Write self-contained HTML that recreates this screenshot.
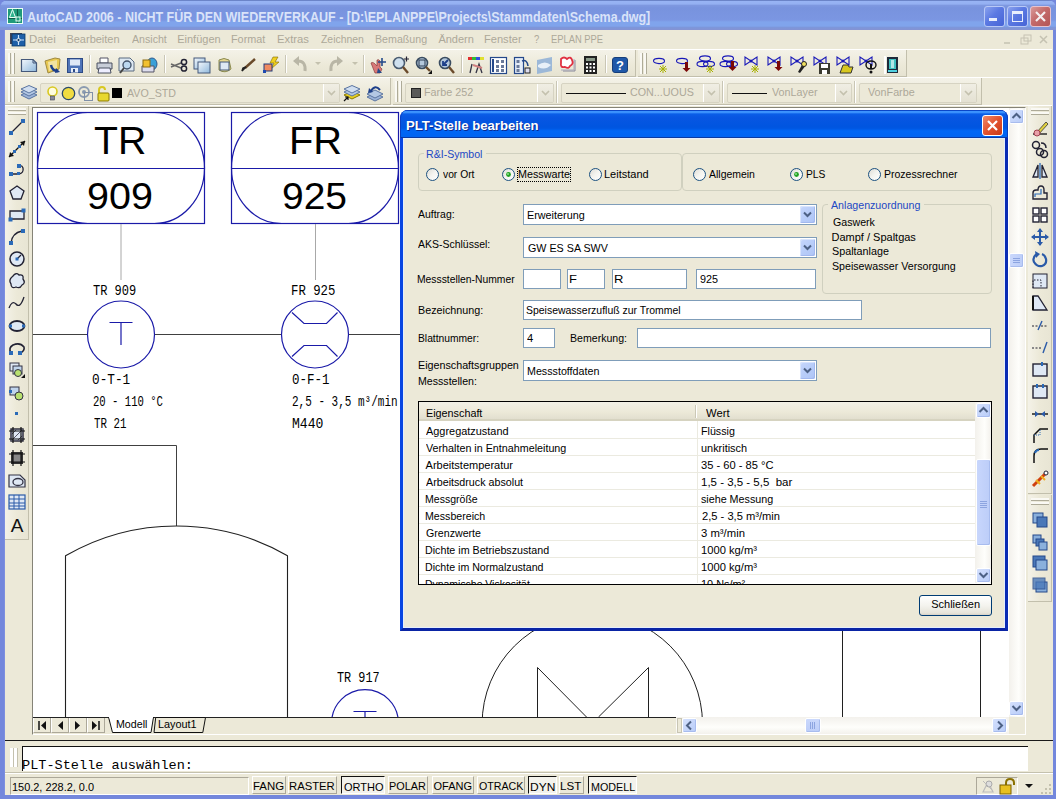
<!DOCTYPE html>
<html><head><meta charset="utf-8">
<style>
*{margin:0;padding:0;box-sizing:border-box}
html,body{width:1056px;height:799px;overflow:hidden;background:#ECE9D8;font-family:"Liberation Sans",sans-serif;font-size:11px;color:#000}
.a{position:absolute}
.t{position:absolute;white-space:pre;line-height:1;transform-origin:0 0}
svg{position:absolute;overflow:visible}
</style></head>
<body>
<div class="a" style="left:0px;top:0px;width:1056px;height:799px;background:#7387dc;"></div>
<div class="a" style="left:0px;top:0px;width:1056px;height:30px;background:linear-gradient(180deg,#6b84c8 0px,#6b84c8 1px,#98b4f4 1px,#94b0f2 4px,#7e98e0 5.5px,#7893de 8px,#7b96e2 20px,#80a4ec 22px,#80a4ec 26px,#7d96da 27.5px,#8592d2 30px);border-radius:8px 8px 0 0;"></div>
<div class="a" style="left:4px;top:30px;width:1049px;height:765px;background:#ECE9D8;"></div>
<svg style="left:7px;top:8px" width="16" height="16" viewBox="0 0 16 16">
<rect x="0.5" y="0.5" width="15" height="15" fill="#1f9a7a" stroke="#eafff6"/>
<path d="M2.5 9.5 L5.5 1.5 L8.5 9.5 Z" fill="#2fb38e" stroke="#eafff6" stroke-width="1"/>
<rect x="10" y="1" width="1" height="14" fill="#0d5a46"/>
<rect x="1" y="10" width="14" height="1" fill="#0d5a46"/>
<rect x="9" y="9" width="4" height="4" fill="#1f9a7a" stroke="#eafff6" stroke-width="1"/>
</svg>
<div class="a" style="left:984px;top:6px;width:21px;height:21px;background:linear-gradient(135deg,#8aa2ee 0%,#5b79e2 45%,#4664d6 100%);border:1px solid #b9c9f6;border-radius:3px;"></div>
<div class="a" style="left:1007px;top:6px;width:21px;height:21px;background:linear-gradient(135deg,#8aa2ee 0%,#5b79e2 45%,#4664d6 100%);border:1px solid #b9c9f6;border-radius:3px;"></div>
<div class="a" style="left:1030px;top:6px;width:21px;height:21px;background:linear-gradient(135deg,#d99a9a 0%,#c46a6a 45%,#b35454 100%);border:1px solid #e6c3cf;border-radius:3px;"></div>
<div class="a" style="left:989px;top:18px;width:8px;height:3px;background:#e8eefc;"></div>
<div class="a" style="left:1012px;top:11px;width:11px;height:11px;border:1px solid #e8eefc;border-top-width:3px;"></div>
<svg style="left:1030px;top:6px" width="21" height="21"><path d="M6 6 L15 15 M15 6 L6 15" stroke="#f4eef0" stroke-width="2.2"/></svg>
<svg style="left:9px;top:32px" width="17" height="15" viewBox="0 0 17 15">
<rect x="1" y="1" width="12" height="11" fill="#445" />
<rect x="3" y="2" width="13" height="12" fill="#1d5fa8" stroke="#0c3866" stroke-width="0.8"/>
<path d="M9.5 3 V13 M4 8 H15" stroke="#cfe6ff" stroke-width="1.2"/>
<circle cx="9.5" cy="8" r="1.6" fill="#0c3866" stroke="#fff" stroke-width="0.8"/>
</svg>
<svg style="left:995px;top:33px" width="56" height="15">
<path d="M9 10 H15" stroke="#c5c2b2" stroke-width="1.5"/>
<rect x="26" y="5" width="7" height="6" fill="none" stroke="#c5c2b2"/><rect x="29" y="2" width="7" height="6" fill="none" stroke="#c5c2b2"/>
<path d="M45 3 L52 10 M52 3 L45 10" stroke="#c5c2b2" stroke-width="1.5"/>
</svg>
<div class="a" style="left:4px;top:49px;width:1048px;height:1px;background:#fff;"></div>
<div class="a" style="left:4px;top:77px;width:1048px;height:1px;background:#fff;"></div>
<div class="a" style="left:5px;top:50px;width:631px;height:27px;background:linear-gradient(180deg,#f4f2e8,#ECE9D8 60%,#e6e3d2);border-bottom:1px solid #c2bfac;border-right:1px solid #c2bfac;"></div>
<div class="a" style="left:8px;top:53px;width:2px;height:21px;background:#faf9f4;border-right:1px solid #aeab98;width:3px;"></div>
<div class="a" style="left:12px;top:53px;width:2px;height:21px;background:#faf9f4;border-right:1px solid #aeab98;width:3px;"></div>
<div class="a" style="left:638px;top:50px;width:269px;height:27px;background:linear-gradient(180deg,#f4f2e8,#ECE9D8 60%,#e6e3d2);border-bottom:1px solid #c2bfac;border-right:1px solid #c2bfac;"></div>
<div class="a" style="left:640px;top:53px;width:2px;height:21px;background:#faf9f4;border-right:1px solid #aeab98;width:3px;"></div>
<div class="a" style="left:644px;top:53px;width:2px;height:21px;background:#faf9f4;border-right:1px solid #aeab98;width:3px;"></div>
<div class="a" style="left:89px;top:55px;width:1px;height:18px;background:#c9c6b5;"></div>
<div class="a" style="left:90px;top:55px;width:1px;height:18px;background:#fff;"></div>
<div class="a" style="left:164px;top:55px;width:1px;height:18px;background:#c9c6b5;"></div>
<div class="a" style="left:165px;top:55px;width:1px;height:18px;background:#fff;"></div>
<div class="a" style="left:285px;top:55px;width:1px;height:18px;background:#c9c6b5;"></div>
<div class="a" style="left:286px;top:55px;width:1px;height:18px;background:#fff;"></div>
<div class="a" style="left:363px;top:55px;width:1px;height:18px;background:#c9c6b5;"></div>
<div class="a" style="left:364px;top:55px;width:1px;height:18px;background:#fff;"></div>
<div class="a" style="left:461px;top:55px;width:1px;height:18px;background:#c9c6b5;"></div>
<div class="a" style="left:462px;top:55px;width:1px;height:18px;background:#fff;"></div>
<div class="a" style="left:605px;top:55px;width:1px;height:18px;background:#c9c6b5;"></div>
<div class="a" style="left:606px;top:55px;width:1px;height:18px;background:#fff;"></div>
<div class="a" style="left:5px;top:78px;width:386px;height:27px;background:linear-gradient(180deg,#f4f2e8,#ECE9D8 60%,#e6e3d2);border-bottom:1px solid #c2bfac;border-right:1px solid #c2bfac;"></div>
<div class="a" style="left:8px;top:81px;width:2px;height:21px;background:#faf9f4;border-right:1px solid #aeab98;width:3px;"></div>
<div class="a" style="left:12px;top:81px;width:2px;height:21px;background:#faf9f4;border-right:1px solid #aeab98;width:3px;"></div>
<div class="a" style="left:393px;top:78px;width:589px;height:27px;background:linear-gradient(180deg,#f4f2e8,#ECE9D8 60%,#e6e3d2);border-bottom:1px solid #c2bfac;border-right:1px solid #c2bfac;"></div>
<div class="a" style="left:395px;top:81px;width:2px;height:21px;background:#faf9f4;border-right:1px solid #aeab98;width:3px;"></div>
<div class="a" style="left:399px;top:81px;width:2px;height:21px;background:#faf9f4;border-right:1px solid #aeab98;width:3px;"></div>
<svg style="left:0;top:0" width="0" height="0"><defs><linearGradient id="gb" x1="0" y1="0" x2="1" y2="1"><stop offset="0" stop-color="#f4f8fc"/><stop offset="1" stop-color="#8fb8dc"/></linearGradient><linearGradient id="gy" x1="0" y1="0" x2="0" y2="1"><stop offset="0" stop-color="#fff38a"/><stop offset="1" stop-color="#d8b400"/></linearGradient></defs></svg>
<svg style="left:20px;top:58px;" width="18" height="15" viewBox="0 0 18 15"><path d="M1.5 1.5 H13 L16.5 5 V13.5 H1.5 Z" fill="url(#gb)" stroke="#44587a" stroke-width="1.2"/><path d="M13 1.5 V5 H16.5" fill="none" stroke="#44587a"/></svg>
<svg style="left:43px;top:57px;" width="19" height="17" viewBox="0 0 19 17"><path d="M2 4 L12 1 L17 2 L16 12 L5 16 Z" fill="#e8c850" stroke="#a08a40"/><path d="M5 5 L14 3 L14 11 L6 14Z" fill="#f2e2a0"/><path d="M8 8 Q9 14 15 14" stroke="#1d3f8a" stroke-width="2.4" fill="none"/><path d="M13 11 L17 15 L12 16Z" fill="#1d3f8a"/></svg>
<svg style="left:67px;top:58px;" width="16" height="15" viewBox="0 0 16 15"><rect x="0.5" y="0.5" width="15" height="14" fill="#4f74b8" stroke="#2c4a86"/><rect x="3" y="1.5" width="10" height="6" fill="#dfe8f6"/><rect x="4" y="10" width="7" height="4.5" fill="#e8eef8"/><rect x="6" y="11" width="2" height="3" fill="#2c4a86"/></svg>
<svg style="left:96px;top:57px;" width="17" height="17" viewBox="0 0 17 17"><path d="M4 1 H12 V6 H4Z" fill="#fff" stroke="#556"/><path d="M1 6 H16 V12 H1Z" fill="#c8cdd8" stroke="#4a5060"/><path d="M3 11 H14 L15 16 H2Z" fill="#eef" stroke="#4a5060"/></svg>
<svg style="left:118px;top:57px;" width="17" height="18" viewBox="0 0 17 18"><path d="M1 1 H12 L16 5 V14 H1Z" fill="#dde8f2" stroke="#5a6a80"/><circle cx="9" cy="8" r="4" fill="#bcd8f0" stroke="#44546a" stroke-width="1.4"/><path d="M6 11 L2 16" stroke="#444" stroke-width="2"/></svg>
<svg style="left:140px;top:57px;" width="18" height="17" viewBox="0 0 18 17"><ellipse cx="12" cy="7" rx="5" ry="6" fill="#3aa0d8" stroke="#2a5a90"/><path d="M2 9 H14 V15 H2Z" fill="#dde" stroke="#556"/><rect x="3" y="3" width="7" height="7" fill="#f2c030" stroke="#8a6a10"/></svg>
<svg style="left:170px;top:58px;" width="18" height="14" viewBox="0 0 18 14"><path d="M1 6 L11 10 M1 9 L11 5" stroke="#666" stroke-width="1.4"/><circle cx="14" cy="4" r="2.6" fill="none" stroke="#223" stroke-width="1.5"/><circle cx="14" cy="10.5" r="2.6" fill="none" stroke="#223" stroke-width="1.5"/></svg>
<svg style="left:193px;top:57px;" width="18" height="17" viewBox="0 0 18 17"><rect x="1" y="1" width="11" height="11" fill="url(#gb)" stroke="#44587a"/><rect x="5" y="5" width="12" height="11" fill="url(#gb)" stroke="#44587a"/></svg>
<svg style="left:216px;top:57px;" width="17" height="17" viewBox="0 0 17 17"><path d="M3 3 Q8 0 13 3 L15 12 Q9 17 3 13 Z" fill="#e8d890" stroke="#8a8a50"/><rect x="4" y="5" width="9" height="8" fill="#dfe9f4" stroke="#44587a"/></svg>
<svg style="left:241px;top:58px;" width="15" height="14" viewBox="0 0 15 14"><path d="M14 1 L4 10" stroke="#6a4a2a" stroke-width="2.4"/><path d="M5 9 L1 13 L2 10Z" fill="#222" stroke="#222" stroke-width="1.5"/></svg>
<svg style="left:262px;top:56px;" width="18" height="18" viewBox="0 0 18 18"><path d="M11 1 L16 1 L13 6 L17 6 L9 13 L12 7 L8 7Z" fill="#f0d020" stroke="#806a00" stroke-width="0.6"/><rect x="2" y="8" width="8" height="7" fill="#f08a60" stroke="#223a7a"/><rect x="1" y="14" width="3" height="3" fill="#1f4ab0"/></svg>
<svg style="left:291px;top:56px;" width="17" height="18" viewBox="0 0 17 18"><path d="M14 15 Q15 5 7 5" stroke="#b9b6a6" stroke-width="3" fill="none"/><path d="M2 5 L8 0 L8 10Z" fill="#b9b6a6"/></svg>
<svg style="left:315px;top:62px;" width="6" height="4" viewBox="0 0 6 4"><path d="M0 0 H6 L3 3Z" fill="#c4c1ae"/></svg>
<svg style="left:328px;top:56px;" width="17" height="18" viewBox="0 0 17 18"><path d="M3 15 Q2 5 10 5" stroke="#b9b6a6" stroke-width="3" fill="none"/><path d="M15 5 L9 0 L9 10Z" fill="#b9b6a6"/></svg>
<svg style="left:352px;top:62px;" width="6" height="4" viewBox="0 0 6 4"><path d="M0 0 H6 L3 3Z" fill="#c4c1ae"/></svg>
<svg style="left:369px;top:57px;" width="18" height="18" viewBox="0 0 18 18"><path d="M2 6 Q4 4 8 9 L8 3 Q10 2 11 4 L11 10 L13 12 L11 16 L6 16 Z" fill="#d87878" stroke="#8a3a3a" stroke-width="0.7"/><path d="M9 11 L13 16 L8 16Z" fill="#244a8a"/><path d="M13 1 V9 M9 5 H17" stroke="#244a8a" stroke-width="1.6"/></svg>
<svg style="left:392px;top:56px;" width="18" height="19" viewBox="0 0 18 19"><circle cx="7" cy="7" r="5.5" fill="#cfe0ee" stroke="#4a5c70" stroke-width="1.6"/><path d="M11 11 L16 17" stroke="#6a4a2a" stroke-width="2.4"/><path d="M12 3 H17 M14.5 0.5 V5.5" stroke="#223" stroke-width="1.2"/></svg>
<svg style="left:415px;top:56px;" width="18" height="19" viewBox="0 0 18 19"><circle cx="7" cy="7" r="5.5" fill="#b4c8dc" stroke="#3a4c60" stroke-width="1.6"/><rect x="4" y="4" width="6" height="6" fill="none" stroke="#2a3a50"/><path d="M11 11 L15 15" stroke="#6a4a2a" stroke-width="2.4"/><path d="M13 18 L17 14 V18Z" fill="#111"/></svg>
<svg style="left:438px;top:56px;" width="17" height="19" viewBox="0 0 17 19"><circle cx="7" cy="7" r="5.5" fill="#b4c8dc" stroke="#3a4c60" stroke-width="1.6"/><path d="M10 4 L5 9 M5 5 V9 H9" stroke="#1d3f8a" stroke-width="1.8" fill="none"/><path d="M11 11 L16 17" stroke="#6a4a2a" stroke-width="2.4"/></svg>
<svg style="left:467px;top:56px;" width="18" height="19" viewBox="0 0 18 19"><rect x="1" y="1" width="4" height="3" fill="#e03030"/><rect x="5" y="1" width="4" height="3" fill="#30c030"/><rect x="9" y="1" width="4" height="3" fill="#3050e0"/><rect x="13" y="1" width="4" height="3" fill="#e0e030"/><path d="M3 17 L5 8 M9 17 L12 8 L15 17" stroke="#334" stroke-width="1.3" fill="none"/><path d="M6 9 L15 12" stroke="#d08080" stroke-width="2"/></svg>
<svg style="left:490px;top:57px;" width="17" height="17" viewBox="0 0 17 17"><rect x="0.5" y="0.5" width="16" height="16" fill="#fff" stroke="#24488a" stroke-width="1.2"/><rect x="2" y="2" width="2" height="13" fill="#24488a"/><rect x="6" y="3" width="3" height="3" fill="#6a7a9a"/><rect x="11" y="3" width="3" height="3" fill="#6a7a9a"/><rect x="6" y="8" width="3" height="3" fill="#6a7a9a"/><rect x="11" y="8" width="3" height="3" fill="#6a7a9a"/><rect x="6" y="12" width="3" height="3" fill="#6a7a9a"/><rect x="11" y="12" width="3" height="3" fill="#6a7a9a"/></svg>
<svg style="left:514px;top:57px;" width="17" height="17" viewBox="0 0 17 17"><rect x="0.5" y="0.5" width="9" height="16" fill="#e4ecf8" stroke="#24488a" stroke-width="1.2"/><rect x="2.5" y="3" width="3" height="3" fill="#6a7a9a"/><rect x="2.5" y="8" width="3" height="3" fill="#6a7a9a"/><rect x="2.5" y="12" width="3" height="3" fill="#6a7a9a"/><path d="M8 4 Q13 2 14 9" stroke="#24488a" stroke-width="1.6" fill="none"/><rect x="11" y="11" width="5" height="5" fill="#dde" stroke="#222"/></svg>
<svg style="left:536px;top:57px;" width="17" height="17" viewBox="0 0 17 17"><path d="M1 3 L16 0 V14 L1 17Z" fill="#9cb8d8"/><path d="M2 8 Q9 3 15 8 Q9 14 2 10Z" fill="#e8f0f8"/></svg>
<svg style="left:559px;top:56px;" width="17" height="18" viewBox="0 0 17 18"><path d="M4 15 H16 V4" stroke="#889" fill="none"/><path d="M2 14 H15 V3" stroke="#aab" fill="none"/><path d="M2 3 Q5 0 8 3 Q12 0 13 4 Q15 8 11 10 Q10 13 6 11 Q1 12 2 7 Z" fill="#fff" stroke="#e03040" stroke-width="1.8"/></svg>
<svg style="left:584px;top:56px;" width="13" height="18" viewBox="0 0 13 18"><rect x="0" y="0" width="13" height="18" fill="#222"/><rect x="2" y="2" width="9" height="3" fill="#8a9a8a"/><g fill="#fff"><rect x="2" y="7" width="2" height="2"/><rect x="5.5" y="7" width="2" height="2"/><rect x="9" y="7" width="2" height="2"/><rect x="2" y="10.5" width="2" height="2"/><rect x="5.5" y="10.5" width="2" height="2"/><rect x="9" y="10.5" width="2" height="2"/><rect x="2" y="14" width="2" height="2"/><rect x="5.5" y="14" width="2" height="2"/><rect x="9" y="14" width="2" height="2"/></g></svg>
<svg style="left:612px;top:57px;" width="16" height="16" viewBox="0 0 16 16"><rect x="0.5" y="0.5" width="15" height="15" rx="2.5" fill="#1f58a8" stroke="#163e7a"/><text x="8" y="13" font-family="Liberation Sans" font-weight="bold" font-size="13" fill="#fff" text-anchor="middle">?</text></svg>
<svg style="left:652px;top:56px;" width="18" height="19" viewBox="0 0 18 19"><ellipse cx="7" cy="5" rx="5.5" ry="2.6" fill="none" stroke="#1818b8" stroke-width="1.1"/><path d="M7 13 H15 M11 9 V17 M8 10 L14 16 M14 10 L8 16" stroke="#a8b000" stroke-width="1"/></svg>
<svg style="left:675px;top:56px;" width="18" height="19" viewBox="0 0 18 19"><ellipse cx="7" cy="5" rx="5.5" ry="2.6" fill="none" stroke="#1818b8" stroke-width="1.1"/><path d="M10 6 V12 H7.5 L11.5 16 L15.5 12 H13 V6Z" fill="#7a0808"/></svg>
<svg style="left:698px;top:55px;" width="18" height="20" viewBox="0 0 18 20"><ellipse cx="7" cy="3.5" rx="5.5" ry="2.6" fill="none" stroke="#1818b8" stroke-width="1.1"/><ellipse cx="4.5" cy="9" rx="5.5" ry="2.6" fill="none" stroke="#1818b8" stroke-width="1.1"/><ellipse cx="11" cy="9" rx="5.5" ry="2.6" fill="none" stroke="#1818b8" stroke-width="1.1"/><path d="M8 14 H16 M12 10 V18 M9 11 L15 17 M15 11 L9 17" stroke="#a8b000" stroke-width="1"/></svg>
<svg style="left:721px;top:55px;" width="18" height="20" viewBox="0 0 18 20"><ellipse cx="7" cy="3.5" rx="5.5" ry="2.6" fill="none" stroke="#1818b8" stroke-width="1.1"/><ellipse cx="4.5" cy="9" rx="5.5" ry="2.6" fill="none" stroke="#1818b8" stroke-width="1.1"/><ellipse cx="11" cy="9" rx="5.5" ry="2.6" fill="none" stroke="#1818b8" stroke-width="1.1"/><path d="M10 6 V12 H7.5 L11.5 16 L15.5 12 H13 V6Z" fill="#7a0808"/></svg>
<svg style="left:744px;top:55px;" width="18" height="20" viewBox="0 0 18 20"><path d="M1 2 V10 L13 2 V10 Z" fill="none" stroke="#1818b8" stroke-width="1.1"/><circle cx="7" cy="6" r="1.5" fill="#1818b8"/><path d="M7 14 H15 M11 10 V18 M8 11 L14 17 M14 11 L8 17" stroke="#a8b000" stroke-width="1"/></svg>
<svg style="left:767px;top:55px;" width="18" height="20" viewBox="0 0 18 20"><path d="M1 2 V10 L13 2 V10 Z" fill="none" stroke="#1818b8" stroke-width="1.1"/><circle cx="7" cy="6" r="1.5" fill="#1818b8"/><path d="M10 6 V12 H7.5 L11.5 16 L15.5 12 H13 V6Z" fill="#7a0808"/></svg>
<svg style="left:790px;top:55px;" width="18" height="20" viewBox="0 0 18 20"><path d="M1 2 V10 L13 2 V10 Z" fill="none" stroke="#1818b8" stroke-width="1.1"/><circle cx="7" cy="6" r="1.5" fill="#1818b8"/><path d="M8 17 L13 8 L16 10 L10 18Z" fill="#222"/><circle cx="14" cy="9" r="2.5" fill="#f0e060" stroke="#222"/></svg>
<svg style="left:813px;top:55px;" width="18" height="20" viewBox="0 0 18 20"><path d="M1 2 V10 L13 2 V10 Z" fill="none" stroke="#1818b8" stroke-width="1.1"/><circle cx="7" cy="6" r="1.5" fill="#1818b8"/><rect x="6" y="8" width="11" height="11" fill="#3a3a30"/><rect x="8" y="9" width="7" height="4" fill="#fff"/><rect x="9" y="15" width="5" height="4" fill="#fff"/></svg>
<svg style="left:836px;top:55px;" width="18" height="20" viewBox="0 0 18 20"><path d="M1 2 V10 L13 2 V10 Z" fill="none" stroke="#1818b8" stroke-width="1.1"/><circle cx="7" cy="6" r="1.5" fill="#1818b8"/><path d="M4 18 L7 10 H12 L13 12 H17 L15 18Z" fill="#d8c820" stroke="#333"/></svg>
<svg style="left:859px;top:55px;" width="18" height="20" viewBox="0 0 18 20"><path d="M1 2 V10 L13 2 V10 Z" fill="none" stroke="#1818b8" stroke-width="1.1"/><circle cx="7" cy="6" r="1.5" fill="#1818b8"/><ellipse cx="12" cy="10" rx="5" ry="4" fill="none" stroke="#111" stroke-width="1.4"/><rect x="11" y="9" width="2" height="5" fill="#111"/><circle cx="12" cy="17" r="1.5" fill="#111"/></svg>
<svg style="left:884px;top:56px;" width="15" height="18" viewBox="0 0 15 18"><rect x="0" y="0" width="2" height="18" fill="#fff"/><rect x="3" y="1" width="11" height="16" fill="#1e2a3a"/><rect x="5" y="3" width="7" height="10" fill="#40c0c0"/><rect x="7" y="4" width="3" height="8" fill="#fff" opacity=".6"/><rect x="4" y="14" width="9" height="2" fill="#50d0e0"/></svg>
<svg style="left:20px;top:85px;" width="18" height="16" viewBox="0 0 18 16"><path d="M1 10 L9 6 L17 10 L9 14Z" fill="#9db4d8" stroke="#5a74a0"/><path d="M1 7 L9 3 L17 7 L9 11Z" fill="#b4c8e4" stroke="#5a74a0"/><path d="M1 4 L9 0.5 L17 4 L9 8Z" fill="#d0def0" stroke="#5a74a0"/></svg>
<div class="a" style="left:40px;top:83px;width:300px;height:20px;background:#ECE9D8;border:1px solid #d6d3c2;border-radius:2px;"></div>
<div class="a" style="left:323px;top:84px;width:16px;height:18px;background:linear-gradient(180deg,#f0eee4,#e4e1d2);border-left:1px solid #fff;"></div>
<svg style="left:327px;top:90px;" width="9" height="6" viewBox="0 0 9 6"><path d="M1 1 L4.5 4.5 L8 1" stroke="#c4c1ae" stroke-width="1.6" fill="none"/></svg>
<svg style="left:47px;top:86px;" width="11" height="16" viewBox="0 0 11 16"><circle cx="5.5" cy="5.5" r="4.5" fill="#fffce0" stroke="#d8c820" stroke-width="1.6"/><rect x="3.5" y="10" width="4" height="4" fill="#889" stroke="#445" stroke-width="0.6"/></svg>
<svg style="left:61px;top:86px;" width="15" height="15" viewBox="0 0 15 15"><circle cx="7.5" cy="7.5" r="6.2" fill="#f0dc40" stroke="#2a4a6a" stroke-width="1.3"/></svg>
<svg style="left:78px;top:86px;" width="15" height="15" viewBox="0 0 15 15"><circle cx="6" cy="6" r="5" fill="none" stroke="#8a9ab0" stroke-width="1.8"/><circle cx="6" cy="6" r="2" fill="#8a9ab0"/><rect x="6.5" y="6.5" width="8" height="8" fill="none" stroke="#8090a8"/></svg>
<svg style="left:96px;top:86px;" width="14" height="15" viewBox="0 0 14 15"><path d="M3 7 V4 Q3 1 6 1 Q9 1 9 4" stroke="#d8c820" stroke-width="2" fill="none"/><rect x="2" y="7" width="11" height="8" rx="1" fill="#e8d830" stroke="#8a7a00"/></svg>
<div class="a" style="left:112px;top:88px;width:10px;height:10px;background:#000;"></div>
<svg style="left:343px;top:85px;" width="18" height="17" viewBox="0 0 18 17"><path d="M1 10 L9 6 L17 10 L9 14Z" fill="#e8d020" stroke="#8a7a00"/><path d="M1 7 L9 3 L17 7 L9 11Z" fill="#b4c8e4" stroke="#5a74a0"/><path d="M1 4 L9 0.5 L17 4 L9 8Z" fill="#d0def0" stroke="#5a74a0"/><path d="M1 16 L5 12 M2 12 H5 V15" stroke="#111" stroke-width="1.2" fill="none"/></svg>
<svg style="left:366px;top:85px;" width="18" height="17" viewBox="0 0 18 17"><path d="M1 12 L9 8 L17 12 L9 16Z" fill="#9db4d8" stroke="#5a74a0"/><path d="M1 9 L9 5 L17 9 L9 13Z" fill="#b4c8e4" stroke="#5a74a0"/><path d="M5 6 Q9 -1 14 5" stroke="#1d3f8a" stroke-width="2" fill="none"/><path d="M3 3 L7 7 L2 8Z" fill="#1d3f8a"/></svg>
<div class="a" style="left:405px;top:83px;width:149px;height:20px;background:#ECE9D8;border:1px solid #d6d3c2;border-radius:2px;"></div>
<div class="a" style="left:537px;top:84px;width:16px;height:18px;background:linear-gradient(180deg,#f0eee4,#e4e1d2);border-left:1px solid #fff;"></div>
<svg style="left:541px;top:90px;" width="9" height="6" viewBox="0 0 9 6"><path d="M1 1 L4.5 4.5 L8 1" stroke="#c4c1ae" stroke-width="1.6" fill="none"/></svg>
<div class="a" style="left:411px;top:88px;width:10px;height:10px;background:#5a5a58;border:1px solid #222;"></div>
<div class="a" style="left:556px;top:81px;width:1px;height:22px;background:#c9c6b5;"></div>
<div class="a" style="left:557px;top:81px;width:1px;height:22px;background:#fff;"></div>
<div class="a" style="left:561px;top:83px;width:159px;height:20px;background:#ECE9D8;border:1px solid #d6d3c2;border-radius:2px;"></div>
<div class="a" style="left:703px;top:84px;width:16px;height:18px;background:linear-gradient(180deg,#f0eee4,#e4e1d2);border-left:1px solid #fff;"></div>
<svg style="left:707px;top:90px;" width="9" height="6" viewBox="0 0 9 6"><path d="M1 1 L4.5 4.5 L8 1" stroke="#c4c1ae" stroke-width="1.6" fill="none"/></svg>
<div class="a" style="left:566px;top:93px;width:60px;height:1px;background:#111;"></div>
<div class="a" style="left:722px;top:81px;width:1px;height:22px;background:#c9c6b5;"></div>
<div class="a" style="left:723px;top:81px;width:1px;height:22px;background:#fff;"></div>
<div class="a" style="left:727px;top:83px;width:125px;height:20px;background:#ECE9D8;border:1px solid #d6d3c2;border-radius:2px;"></div>
<div class="a" style="left:835px;top:84px;width:16px;height:18px;background:linear-gradient(180deg,#f0eee4,#e4e1d2);border-left:1px solid #fff;"></div>
<svg style="left:839px;top:90px;" width="9" height="6" viewBox="0 0 9 6"><path d="M1 1 L4.5 4.5 L8 1" stroke="#c4c1ae" stroke-width="1.6" fill="none"/></svg>
<div class="a" style="left:732px;top:93px;width:35px;height:1px;background:#111;"></div>
<div class="a" style="left:854px;top:81px;width:1px;height:22px;background:#c9c6b5;"></div>
<div class="a" style="left:855px;top:81px;width:1px;height:22px;background:#fff;"></div>
<div class="a" style="left:859px;top:83px;width:118px;height:20px;background:#ECE9D8;border:1px solid #d6d3c2;border-radius:2px;"></div>
<div class="a" style="left:960px;top:84px;width:16px;height:18px;background:linear-gradient(180deg,#f0eee4,#e4e1d2);border-left:1px solid #fff;"></div>
<svg style="left:964px;top:90px;" width="9" height="6" viewBox="0 0 9 6"><path d="M1 1 L4.5 4.5 L8 1" stroke="#c4c1ae" stroke-width="1.6" fill="none"/></svg>
<div class="a" style="left:4px;top:105px;width:1048px;height:1px;background:#fff;"></div>
<div class="a" style="left:32px;top:107px;width:994px;height:628px;border-top:1px solid #858377;border-left:1px solid #858377;border-right:1px solid #fff;border-bottom:1px solid #fff;background:#ECE9D8;"></div>
<div class="a" style="left:33px;top:108px;width:976px;height:609px;background:#fff;"></div>
<div class="a" style="left:5px;top:106px;width:24px;height:434px;border-right:1px solid #c2bfac;border-bottom:1px solid #c2bfac;background:linear-gradient(90deg,#f4f2e8,#ECE9D8 50%,#e8e5d4);"></div>
<div class="a" style="left:8px;top:108px;width:18px;height:3px;background:#faf9f4;border-bottom:1px solid #aeab98;"></div>
<div class="a" style="left:8px;top:112px;width:18px;height:3px;background:#faf9f4;border-bottom:1px solid #aeab98;"></div>
<div class="a" style="left:1028px;top:106px;width:24px;height:388px;border-right:1px solid #c2bfac;border-bottom:1px solid #c2bfac;background:linear-gradient(90deg,#f4f2e8,#ECE9D8 50%,#e8e5d4);"></div>
<div class="a" style="left:1031px;top:108px;width:18px;height:3px;background:#faf9f4;border-bottom:1px solid #aeab98;"></div>
<div class="a" style="left:1031px;top:112px;width:18px;height:3px;background:#faf9f4;border-bottom:1px solid #aeab98;"></div>
<div class="a" style="left:1028px;top:495px;width:24px;height:107px;border-right:1px solid #c2bfac;border-bottom:1px solid #c2bfac;background:linear-gradient(90deg,#f4f2e8,#ECE9D8 50%,#e8e5d4);"></div>
<div class="a" style="left:1031px;top:498px;width:18px;height:3px;background:#faf9f4;border-bottom:1px solid #aeab98;"></div>
<div class="a" style="left:1031px;top:502px;width:18px;height:3px;background:#faf9f4;border-bottom:1px solid #aeab98;"></div>
<svg style="left:8px;top:118px;" width="18" height="18" viewBox="0 0 18 18"><path d="M3 15 L15 3" stroke="#223" stroke-width="1.3"/><rect x="1" y="13" width="4" height="4" fill="#2a6ab8"/><rect x="13" y="1" width="4" height="4" fill="#2a6ab8"/></svg>
<svg style="left:8px;top:140px;" width="18" height="18" viewBox="0 0 18 18"><path d="M1 17 L17 1" stroke="#111" stroke-width="1.3"/><path d="M1 17 L2 12 L6 16Z M17 1 L12 2 L16 6Z" fill="#111"/><rect x="5" y="10" width="3" height="3" fill="#2a6ab8"/><rect x="10" y="5" width="3" height="3" fill="#2a6ab8"/></svg>
<svg style="left:8px;top:162px;" width="18" height="18" viewBox="0 0 18 18"><path d="M3 12 H11 Q16 11 15 6 Q14 3 11 4" stroke="#223" stroke-width="1.3" fill="none"/><rect x="1" y="10" width="4" height="4" fill="#2a6ab8"/><rect x="9" y="10" width="3" height="3" fill="#2a6ab8"/><rect x="9" y="2" width="4" height="4" fill="#2a6ab8"/></svg>
<svg style="left:8px;top:184px;" width="18" height="18" viewBox="0 0 18 18"><path d="M9 2 L16 7 L13 15 H5 L2 7Z" fill="#dfe8f4" stroke="#223" stroke-width="1.3"/></svg>
<svg style="left:8px;top:206px;" width="18" height="18" viewBox="0 0 18 18"><path d="M2 5 H16 V13 H2Z" fill="#dfe8f4" stroke="#223" stroke-width="1.3"/><rect x="0.5" y="11.5" width="4" height="4" fill="#2a6ab8"/><rect x="13.5" y="2.5" width="4" height="4" fill="#2a6ab8"/></svg>
<svg style="left:8px;top:228px;" width="18" height="18" viewBox="0 0 18 18"><path d="M3 15 Q4 5 14 3" stroke="#223" stroke-width="1.4" fill="none"/><rect x="1" y="13" width="4" height="4" fill="#2a6ab8"/><rect x="13" y="1" width="4" height="4" fill="#2a6ab8"/></svg>
<svg style="left:8px;top:250px;" width="18" height="18" viewBox="0 0 18 18"><circle cx="9" cy="9" r="7" fill="#dfe8f4" stroke="#223" stroke-width="1.5"/><path d="M9 9 L13 5" stroke="#223" stroke-width="1.3"/><rect x="7.5" y="7.5" width="3" height="3" fill="#2a6ab8"/></svg>
<svg style="left:8px;top:272px;" width="18" height="18" viewBox="0 0 18 18"><path d="M5 4 Q8 0 11 3 Q16 2 15 7 Q18 11 14 13 Q12 17 8 15 Q3 17 3 12 Q0 8 5 4Z" fill="#dfe8f4" stroke="#223" stroke-width="1.3"/></svg>
<svg style="left:8px;top:294px;" width="18" height="18" viewBox="0 0 18 18"><path d="M1 14 Q4 6 8 10 Q12 15 16 3" stroke="#223" stroke-width="1.3" fill="none"/></svg>
<svg style="left:8px;top:317px;" width="18" height="18" viewBox="0 0 18 18"><ellipse cx="9" cy="9" rx="7.5" ry="5" fill="#dfe8f4" stroke="#223" stroke-width="1.8"/><rect x="1" y="7.5" width="3" height="3" fill="#2a6ab8"/><rect x="14" y="7.5" width="3" height="3" fill="#2a6ab8"/></svg>
<svg style="left:8px;top:340px;" width="18" height="18" viewBox="0 0 18 18"><path d="M3 13 Q0 8 5 5 Q12 2 16 7 Q17 11 12 13" stroke="#223" stroke-width="1.6" fill="none"/><rect x="1" y="11" width="4" height="4" fill="#2a6ab8"/><rect x="10" y="11" width="4" height="4" fill="#2a6ab8"/></svg>
<svg style="left:8px;top:361px;" width="18" height="18" viewBox="0 0 18 18"><rect x="2" y="2" width="9" height="8" fill="#dfe8f4" stroke="#334"/><rect x="5" y="5" width="9" height="8" fill="#c0d4ec" stroke="#334"/><circle cx="10" cy="12" r="3.5" fill="#b8e070" stroke="#334"/><path d="M13 17 L17 13 V17Z" fill="#111"/></svg>
<svg style="left:8px;top:384px;" width="18" height="18" viewBox="0 0 18 18"><rect x="2" y="3" width="9" height="8" fill="#c0d4ec" stroke="#334"/><circle cx="11" cy="12" r="4" fill="#b8e070" stroke="#334"/><rect x="1" y="6" width="3" height="3" fill="#2a6ab8"/></svg>
<svg style="left:8px;top:405px;" width="18" height="18" viewBox="0 0 18 18"><rect x="7" y="7" width="3" height="3" fill="#2a6ab8"/></svg>
<svg style="left:8px;top:426px;" width="18" height="18" viewBox="0 0 18 18"><rect x="3" y="3" width="12" height="12" fill="#dfe8f4" stroke="#223" stroke-width="1.4"/><path d="M3 9 L9 3 M3 15 L15 3 M9 15 L15 9" stroke="#556" stroke-width="1"/><path d="M1 5 H17 M1 13 H17 M5 1 V17 M13 1 V17" stroke="#111" stroke-width="1.2"/></svg>
<svg style="left:8px;top:449px;" width="18" height="18" viewBox="0 0 18 18"><rect x="3" y="3" width="12" height="12" fill="#333"/><rect x="5" y="5" width="8" height="8" fill="#888"/><path d="M1 5 H17 M1 13 H17 M5 1 V17 M13 1 V17" stroke="#111" stroke-width="1.2"/></svg>
<svg style="left:8px;top:472px;" width="18" height="18" viewBox="0 0 18 18"><path d="M1 3 H12 L17 8 V15 H1Z" fill="#dfe8f4" stroke="#334" stroke-width="1.2"/><ellipse cx="10" cy="10" rx="5" ry="3.5" fill="none" stroke="#334" stroke-width="1.3"/></svg>
<svg style="left:8px;top:493px;" width="18" height="18" viewBox="0 0 18 18"><rect x="1" y="2" width="16" height="14" fill="#dfe8f4" stroke="#2a5aa8" stroke-width="1.2"/><path d="M1 6 H17 M1 10 H17 M1 13 H17 M6 2 V16 M11 2 V16" stroke="#2a5aa8"/></svg>
<svg style="left:8px;top:515px;" width="18" height="18" viewBox="0 0 18 18"><text x="9" y="17" font-family="Liberation Sans" font-size="19" fill="#111" text-anchor="middle">A</text></svg>
<svg style="left:1031px;top:119px;" width="18" height="18" viewBox="0 0 18 18"><path d="M2 15 H16" stroke="#222" stroke-width="1.4"/><path d="M5 14 L15 3 L17 5 L7 16Z" fill="#e0d040" stroke="#333" stroke-width="0.8"/><circle cx="6" cy="14" r="3" fill="#e8a0a8" stroke="#a04050"/></svg>
<svg style="left:1031px;top:140px;" width="18" height="18" viewBox="0 0 18 18"><circle cx="5" cy="5" r="3.5" fill="none" stroke="#223" stroke-width="1.5"/><circle cx="9" cy="12" r="3.5" fill="none" stroke="#223" stroke-width="1.5"/><circle cx="13" cy="14" r="3.5" fill="none" stroke="#223" stroke-width="1.5"/><path d="M10 3 Q15 3 15 8" stroke="#223" stroke-width="1.5" fill="none"/></svg>
<svg style="left:1031px;top:162px;" width="18" height="18" viewBox="0 0 18 18"><path d="M2 15 L7 3 V15Z M16 15 L11 3 V15Z" fill="#dfe8f4" stroke="#223" stroke-width="1.3"/><path d="M9 1 V17" stroke="#2a6ab8" stroke-width="1.3"/></svg>
<svg style="left:1031px;top:184px;" width="18" height="18" viewBox="0 0 18 18"><path d="M2 15 V9 Q2 6 5 6 H7 Q7 2 10 2 Q13 2 13 6 V9 H16 V15Z" fill="none" stroke="#223" stroke-width="1.4"/><path d="M4 13 V10 H10 V5" stroke="#2a6ab8" fill="none" stroke-width="1.2"/></svg>
<svg style="left:1031px;top:206px;" width="18" height="18" viewBox="0 0 18 18"><rect x="2" y="2" width="6" height="6" fill="#fff" stroke="#223" stroke-width="1.4"/><rect x="10" y="2" width="6" height="6" fill="#fff" stroke="#223" stroke-width="1.4"/><rect x="2" y="10" width="6" height="6" fill="#fff" stroke="#223" stroke-width="1.4"/><rect x="10" y="10" width="6" height="6" fill="#fff" stroke="#223" stroke-width="1.4"/></svg>
<svg style="left:1031px;top:228px;" width="18" height="18" viewBox="0 0 18 18"><path d="M9 1 V17 M1 9 H17" stroke="#2a5aa8" stroke-width="2"/><path d="M9 0 L6 4 H12Z M9 18 L6 14 H12Z M0 9 L4 6 V12Z M18 9 L14 6 V12Z" fill="#2a5aa8"/></svg>
<svg style="left:1031px;top:250px;" width="18" height="18" viewBox="0 0 18 18"><path d="M6 4 Q1 7 3 12 Q6 17 11 16 Q16 14 15 9 Q14 5 11 4" fill="none" stroke="#2a5aa8" stroke-width="2.2"/><path d="M4 1 L9 4 L5 8Z" fill="#2a5aa8"/></svg>
<svg style="left:1031px;top:272px;" width="18" height="18" viewBox="0 0 18 18"><rect x="2" y="2" width="14" height="14" fill="#dfe8f4" stroke="#223"/><path d="M2 16 V8 H10 V16" stroke="#223" stroke-dasharray="1.5 1.5" fill="none"/></svg>
<svg style="left:1031px;top:294px;" width="18" height="18" viewBox="0 0 18 18"><path d="M2 16 V2 H7 L16 16Z" fill="#dfe8f4" stroke="#223" stroke-width="1.3"/><path d="M2 16 V2" stroke="#111" stroke-width="2"/></svg>
<svg style="left:1031px;top:316px;" width="18" height="18" viewBox="0 0 18 18"><path d="M1 10 H7 M10 10 H17" stroke="#223" stroke-dasharray="2 1.5"/><path d="M7 14 L11 5" stroke="#2a5aa8" stroke-width="1.4"/></svg>
<svg style="left:1031px;top:338px;" width="18" height="18" viewBox="0 0 18 18"><path d="M1 10 H10" stroke="#223" stroke-dasharray="2 1.5"/><path d="M12 15 L16 4" stroke="#2a5aa8" stroke-width="1.4"/></svg>
<svg style="left:1031px;top:360px;" width="18" height="18" viewBox="0 0 18 18"><rect x="2" y="4" width="14" height="12" fill="#dfe8f4" stroke="#223" stroke-width="1.4"/><path d="M11 2 V6" stroke="#2a6ab8" stroke-width="2"/></svg>
<svg style="left:1031px;top:382px;" width="18" height="18" viewBox="0 0 18 18"><rect x="2" y="4" width="14" height="12" fill="#dfe8f4" stroke="#223" stroke-width="1.4"/><path d="M6 2 V6 M12 2 V6" stroke="#2a6ab8" stroke-width="2"/></svg>
<svg style="left:1031px;top:405px;" width="18" height="18" viewBox="0 0 18 18"><path d="M1 9 H17" stroke="#111" stroke-width="1.4"/><path d="M4 6 L8 9 L4 12Z M14 6 L10 9 L14 12Z" fill="#2a5aa8"/></svg>
<svg style="left:1031px;top:426px;" width="18" height="18" viewBox="0 0 18 18"><path d="M3 17 V9 L9 3 H17" stroke="#111" stroke-width="1.5" fill="none"/><path d="M3 9 H9 V3" stroke="#2a6ab8" stroke-dasharray="1 1" fill="none"/></svg>
<svg style="left:1031px;top:446px;" width="18" height="18" viewBox="0 0 18 18"><path d="M3 17 V10 Q3 3 10 3 H17" stroke="#111" stroke-width="1.5" fill="none"/><path d="M4 7 Q5 4 8 4" stroke="#2a6ab8" stroke-width="2" fill="none"/></svg>
<svg style="left:1031px;top:470px;" width="18" height="18" viewBox="0 0 18 18"><path d="M2 16 L9 9 L14 4" stroke="#d04010" stroke-width="3"/><path d="M5 10 L9 14 M10 6 L14 10" stroke="#f0b020" stroke-width="2"/><circle cx="15" cy="3" r="2" fill="#fff" stroke="#223"/></svg>
<svg style="left:1031px;top:511px;" width="18" height="18" viewBox="0 0 18 18"><rect x="2" y="2" width="10" height="10" fill="#8ab0dc" stroke="#24488a"/><rect x="6" y="6" width="10" height="10" fill="#4a78b8" stroke="#24488a"/></svg>
<svg style="left:1031px;top:533px;" width="18" height="18" viewBox="0 0 18 18"><rect x="2" y="2" width="8" height="8" fill="#8ab0dc" stroke="#24488a"/><rect x="5" y="6" width="8" height="7" fill="#4a78b8" stroke="#24488a"/><rect x="8" y="9" width="8" height="8" fill="#8ab0dc" stroke="#24488a"/></svg>
<svg style="left:1031px;top:554px;" width="18" height="18" viewBox="0 0 18 18"><rect x="2" y="2" width="12" height="11" fill="#4a78b8" stroke="#24488a"/><rect x="5" y="6" width="11" height="10" fill="#8ab0dc" stroke="#24488a"/></svg>
<svg style="left:1031px;top:576px;" width="18" height="18" viewBox="0 0 18 18"><rect x="5" y="6" width="11" height="10" fill="#8ab0dc" stroke="#24488a"/><rect x="2" y="2" width="12" height="11" fill="#4a78b8" stroke="#24488a" opacity=".8"/></svg>
<svg style="left:33px;top:108px;overflow:hidden;" width="976" height="609" viewBox="0 0 976 609">
<defs><clipPath id="c1"><rect x="4" y="4" width="168" height="112"/></clipPath><clipPath id="c2"><rect x="198" y="4" width="168" height="112"/></clipPath></defs>
<g fill="none" stroke-width="1.2" stroke="#1a1aa8">
<rect x="4.5" y="4.5" width="167" height="111"/>
<rect x="4.5" y="4.5" width="167" height="111" rx="50" ry="55.5"/>
<path d="M4.5 60.5 H171.5"/>
<rect x="198.5" y="4.5" width="167" height="111"/>
<rect x="198.5" y="4.5" width="167" height="111" rx="50" ry="55.5"/>
<path d="M198.5 60.5 H365.5"/>
</g>
<g fill="none" stroke-width="1">
<path d="M88 116 V172" stroke="#a8a8a8"/>
<path d="M282.5 116 V172" stroke="#a8a8a8"/>
<path d="M0 226.5 H54.5 M121.5 226.5 H248.5 M315.5 226.5 H370" stroke="#404040"/>
<circle cx="88" cy="226.5" r="33.5" stroke="#1a1aa8" stroke-width="1.2"/>
<path d="M76.5 214.5 H99.5 M88 214.5 V237" stroke="#1a1aa8" stroke-width="1.2"/>
<circle cx="282" cy="226.5" r="33.5" stroke="#1a1aa8" stroke-width="1.2"/>
<path d="M259 204.5 L271 215.5 H293.5 L304.5 204.5 M259 248.5 L271 237.5 H293.5 L304.5 248.5" stroke="#1a1aa8" stroke-width="1.2"/>
<path d="M0 337.5 H143.5 V418" stroke="#404040"/>
<path d="M32.5 609 V447.8 A221.6 221.6 0 0 1 254.5 447.8 V609" stroke="#202020" stroke-width="1.1"/>
<circle cx="332" cy="615" r="33.4" stroke="#1a1aa8" stroke-width="1.2"/>
<path d="M320.5 603.5 H343.5 M332 603.5 V609" stroke="#1a1aa8" stroke-width="1.2"/>
<circle cx="559.3" cy="616" r="110.2" stroke="#202020"/>
<path d="M504.5 609 V559.5 L553.5 609 M565.5 609 L615.5 559.5 V609" stroke="#202020"/>
<path d="M809.5 500 V609 M947.5 500 V609" stroke="#202020"/>
</g></svg>
<div class="a" style="left:1009px;top:108px;width:16px;height:609px;background:linear-gradient(90deg,#f3f1ec,#fefefb 60%,#f3f1ec);"></div>
<div class="a" style="left:1009px;top:109px;width:15px;height:15px;background:linear-gradient(135deg,#d4e0fd,#b8ccf8);border:1px solid #fff;border-radius:2px;box-shadow:inset -1px -1px 0 #a8bcee;"></div>
<svg style="left:1009px;top:109px;" width="15" height="15" viewBox="0 0 15 15"><path d="M3.5 9 L7.5 5 L11.5 9" stroke="#4d6185" stroke-width="2" fill="none"/></svg>
<div class="a" style="left:1009px;top:701px;width:15px;height:15px;background:linear-gradient(135deg,#d4e0fd,#b8ccf8);border:1px solid #fff;border-radius:2px;box-shadow:inset -1px -1px 0 #a8bcee;"></div>
<svg style="left:1009px;top:701px;" width="15" height="15" viewBox="0 0 15 15"><path d="M3.5 5 L7.5 9 L11.5 5" stroke="#4d6185" stroke-width="2" fill="none"/></svg>
<div class="a" style="left:1009px;top:253px;width:15px;height:15px;background:linear-gradient(90deg,#cad8fc,#bccdf8);border:1px solid #fff;border-radius:2px;box-shadow:inset -1px -1px 0 #a8bcee;"></div>
<svg style="left:1009px;top:253px;" width="15" height="15" viewBox="0 0 15 15"><path d="M4 5.5 H11 M4 7.5 H11 M4 9.5 H11" stroke="#8ca4e0"/></svg>
<div class="a" style="left:33px;top:717px;width:976px;height:17px;background:#ECE9D8;border-top:1px solid #222;"></div>
<div class="a" style="left:33px;top:717px;width:643px;height:1px;background:#222;"></div>
<div class="a" style="left:676px;top:717px;width:333px;height:17px;background:linear-gradient(180deg,#f3f1ec,#fefefb 60%,#f3f1ec);"></div>
<div class="a" style="left:677px;top:718px;width:5px;height:15px;background:#ECE9D8;border:1px solid #c8c5b4;"></div>
<div class="a" style="left:682px;top:718px;width:15px;height:15px;background:linear-gradient(135deg,#d4e0fd,#b8ccf8);border:1px solid #fff;border-radius:2px;box-shadow:inset -1px -1px 0 #a8bcee;"></div>
<svg style="left:682px;top:718px;" width="15" height="15" viewBox="0 0 15 15"><path d="M9 3.5 L5 7.5 L9 11.5" stroke="#4d6185" stroke-width="2" fill="none"/></svg>
<div class="a" style="left:992px;top:718px;width:15px;height:15px;background:linear-gradient(135deg,#d4e0fd,#b8ccf8);border:1px solid #fff;border-radius:2px;box-shadow:inset -1px -1px 0 #a8bcee;"></div>
<svg style="left:992px;top:718px;" width="15" height="15" viewBox="0 0 15 15"><path d="M6 3.5 L10 7.5 L6 11.5" stroke="#4d6185" stroke-width="2" fill="none"/></svg>
<div class="a" style="left:805px;top:718px;width:16px;height:15px;background:linear-gradient(180deg,#cad8fc,#bccdf8);border:1px solid #fff;border-radius:2px;box-shadow:inset -1px -1px 0 #a8bcee;"></div>
<svg style="left:805px;top:718px;" width="16" height="15" viewBox="0 0 16 15"><path d="M5.5 4 V11 M7.5 4 V11 M9.5 4 V11" stroke="#8ca4e0"/></svg>
<div class="a" style="left:1009px;top:717px;width:16px;height:17px;background:#ECE9D8;"></div>
<div class="a" style="left:33px;top:718px;width:18px;height:15px;background:#ECE9D8;border-right:1px solid #aca899;border-bottom:1px solid #aca899;border-left:1px solid #fff;"></div>
<div class="a" style="left:51px;top:718px;width:18px;height:15px;background:#ECE9D8;border-right:1px solid #aca899;border-bottom:1px solid #aca899;border-left:1px solid #fff;"></div>
<div class="a" style="left:69px;top:718px;width:18px;height:15px;background:#ECE9D8;border-right:1px solid #aca899;border-bottom:1px solid #aca899;border-left:1px solid #fff;"></div>
<div class="a" style="left:87px;top:718px;width:18px;height:15px;background:#ECE9D8;border-right:1px solid #aca899;border-bottom:1px solid #aca899;border-left:1px solid #fff;"></div>
<svg style="left:33px;top:718px;" width="72" height="15" viewBox="0 0 72 15"><path d="M6 3 V12" stroke="#111" stroke-width="1.5"/><path d="M13 3 L8 7.5 L13 12Z" fill="#111"/><path d="M30 3 L25 7.5 L30 12Z" fill="#111"/><path d="M42 3 L47 7.5 L42 12Z" fill="#111"/><path d="M59 3 L64 7.5 L59 12Z" fill="#111"/><path d="M66 3 V12" stroke="#111" stroke-width="1.5"/></svg>
<svg style="left:105px;top:717px;" width="110" height="17" viewBox="0 0 110 17"><path d="M50.7 0.5 L49 15.5 H97.8 L100.5 0.5 Z" fill="#ECE9D8" stroke="#111"/><path d="M3.5 0 L7.5 15.5 H46 L48.5 0" fill="#fff" stroke="#111"/><path d="M4 0.5 H48" stroke="#fff" stroke-width="1.5"/></svg>
<div class="a" style="left:4px;top:740px;width:1049px;height:1px;background:#1a1a1a;"></div>
<div class="a" style="left:4px;top:741px;width:1049px;height:35px;background:#ECE9D8;"></div>
<div class="a" style="left:10px;top:748px;width:3px;height:19px;background:#fff;border-right:1px solid #c4c1ae;width:4px;"></div>
<div class="a" style="left:14px;top:748px;width:3px;height:19px;background:#fff;border-right:1px solid #c4c1ae;width:4px;"></div>
<div class="a" style="left:22px;top:746px;width:1006px;height:25px;background:#fff;border-top:1px solid #111;border-left:1px solid #111;"></div>
<div class="a" style="left:4px;top:772px;width:1049px;height:1px;background:#c4c1ae;"></div>
<div class="a" style="left:4px;top:773px;width:1049px;height:1px;background:#fff;"></div>
<div class="a" style="left:10px;top:777px;width:239px;height:18px;border-top:1px solid #aca899;border-left:1px solid #aca899;border-bottom:1px solid #fff;border-right:1px solid #fff;"></div>
<div class="a" style="left:252px;top:776px;width:34px;height:18px;border-top:1px solid #fff;border-left:1px solid #fff;border-bottom:1px solid #aca899;border-right:1px solid #aca899;"></div>
<div class="a" style="left:288px;top:776px;width:49px;height:18px;border-top:1px solid #fff;border-left:1px solid #fff;border-bottom:1px solid #aca899;border-right:1px solid #aca899;"></div>
<div class="a" style="left:341px;top:776px;width:44px;height:18px;background:#f3f2ec;border-top:1px solid #111;border-left:1px solid #111;border-bottom:1px solid #fff;border-right:1px solid #fff;"></div>
<div class="a" style="left:388px;top:776px;width:40px;height:18px;border-top:1px solid #fff;border-left:1px solid #fff;border-bottom:1px solid #aca899;border-right:1px solid #aca899;"></div>
<div class="a" style="left:432px;top:776px;width:42px;height:18px;border-top:1px solid #fff;border-left:1px solid #fff;border-bottom:1px solid #aca899;border-right:1px solid #aca899;"></div>
<div class="a" style="left:477px;top:776px;width:48px;height:18px;border-top:1px solid #fff;border-left:1px solid #fff;border-bottom:1px solid #aca899;border-right:1px solid #aca899;"></div>
<div class="a" style="left:528px;top:776px;width:29px;height:18px;background:#f3f2ec;border-top:1px solid #111;border-left:1px solid #111;border-bottom:1px solid #fff;border-right:1px solid #fff;"></div>
<div class="a" style="left:559px;top:776px;width:25px;height:18px;border-top:1px solid #fff;border-left:1px solid #fff;border-bottom:1px solid #aca899;border-right:1px solid #aca899;"></div>
<div class="a" style="left:588px;top:776px;width:49px;height:18px;background:#f3f2ec;border-top:1px solid #111;border-left:1px solid #111;border-bottom:1px solid #fff;border-right:1px solid #fff;"></div>
<div class="a" style="left:976px;top:777px;width:42px;height:18px;border-top:1px solid #aca899;border-left:1px solid #aca899;border-bottom:1px solid #fff;border-right:1px solid #fff;"></div>
<svg style="left:980px;top:778px;" width="16" height="16" viewBox="0 0 16 16"><path d="M3 14 L8 4 L13 14Z" fill="none" stroke="#bbb" stroke-width="1.2"/><circle cx="9" cy="6" r="3" fill="#ddd" stroke="#aaa"/><path d="M3 3 L13 13" stroke="#bbb"/></svg>
<svg style="left:998px;top:778px;" width="18" height="16" viewBox="0 0 18 16"><path d="M8 8 V5 Q8 1 12 1 Q16 1 16 5 V7" stroke="#8a7000" stroke-width="2" fill="none"/><rect x="2" y="7" width="11" height="9" fill="#e8c020" stroke="#7a6000"/></svg>
<svg style="left:1024px;top:783px;" width="10" height="6" viewBox="0 0 10 6"><path d="M1 1 H9 L5 5Z" fill="#111"/></svg>
<svg style="left:1039px;top:782px;" width="14" height="14" viewBox="0 0 14 14"><g fill="#c4c1ae"><rect x="10" y="2" width="2" height="2"/><rect x="6" y="6" width="2" height="2"/><rect x="10" y="6" width="2" height="2"/><rect x="2" y="10" width="2" height="2"/><rect x="6" y="10" width="2" height="2"/><rect x="10" y="10" width="2" height="2"/></g></svg>
<div class="a" style="left:400px;top:110px;width:608px;height:521px;background:#0b3fd4;border-left:3px solid #0845e2;border-right:3px solid #0a2cb4;border-bottom:3px solid #0a24a4;border-radius:8px 8px 0 0;"></div>
<div class="a" style="left:400px;top:110px;width:608px;height:28px;background:linear-gradient(180deg,#0a46c8 0px,#0a46c8 1px,#3d95ff 1px,#3a90fc 2.5px,#0a5ee8 4px,#0856e2 7px,#0055e0 17px,#0058e4 18.5px,#0066f5 21px,#0064f2 26.5px,#0a3aa0 27px,#0a3aa0 28px);border-radius:8px 8px 0 0;border-left:1px solid #0a3fc0;border-right:1px solid #0a3fc0;"></div>
<div class="a" style="left:403px;top:138px;width:602px;height:490px;background:#ECE9D8;border:1px solid #e4eefc;"></div>
<div class="a" style="left:982px;top:115px;width:21px;height:21px;background:linear-gradient(135deg,#f08a6a 0%,#e2522e 50%,#c83a18 100%);border:1px solid #fff;border-radius:3px;"></div>
<svg style="left:982px;top:115px;" width="21" height="21" viewBox="0 0 21 21"><path d="M6 6 L15 15 M15 6 L6 15" stroke="#fff" stroke-width="2.2"/></svg>
<div class="a" style="left:418px;top:153px;width:264px;height:38px;border:1px solid #d0d0bf;border-radius:4px;"></div>
<div class="a" style="left:682px;top:153px;width:310px;height:38px;border:1px solid #d0d0bf;border-radius:4px;"></div>
<div class="a" style="left:822px;top:204px;width:170px;height:90px;border:1px solid #d0d0bf;border-radius:4px;"></div>
<div class="a" style="left:424px;top:148px;width:62px;height:11px;background:#ECE9D8;"></div>
<div class="a" style="left:828px;top:199px;width:96px;height:11px;background:#ECE9D8;"></div>
<svg style="left:426px;top:168px;" width="13" height="13" viewBox="0 0 13 13"><defs><linearGradient id="rg" x1="0" y1="0" x2="1" y2="1"><stop offset="0" stop-color="#dcdad3"/><stop offset=".5" stop-color="#f4f4f0"/><stop offset="1" stop-color="#ffffff"/></linearGradient></defs><circle cx="6.5" cy="6.5" r="6" fill="url(#rg)" stroke="#1c5180" stroke-width="1"/></svg>
<svg style="left:502px;top:168px;" width="13" height="13" viewBox="0 0 13 13"><defs><linearGradient id="rg" x1="0" y1="0" x2="1" y2="1"><stop offset="0" stop-color="#dcdad3"/><stop offset=".5" stop-color="#f4f4f0"/><stop offset="1" stop-color="#ffffff"/></linearGradient></defs><circle cx="6.5" cy="6.5" r="6" fill="url(#rg)" stroke="#1c5180" stroke-width="1"/><circle cx="6.5" cy="6.5" r="2.4" fill="#21a121"/><circle cx="6" cy="6" r="1" fill="#8ce08c"/></svg>
<div class="a" style="left:517px;top:167px;width:54px;height:15px;border:1px dotted #000;"></div>
<svg style="left:589px;top:168px;" width="13" height="13" viewBox="0 0 13 13"><defs><linearGradient id="rg" x1="0" y1="0" x2="1" y2="1"><stop offset="0" stop-color="#dcdad3"/><stop offset=".5" stop-color="#f4f4f0"/><stop offset="1" stop-color="#ffffff"/></linearGradient></defs><circle cx="6.5" cy="6.5" r="6" fill="url(#rg)" stroke="#1c5180" stroke-width="1"/></svg>
<svg style="left:693px;top:168px;" width="13" height="13" viewBox="0 0 13 13"><defs><linearGradient id="rg" x1="0" y1="0" x2="1" y2="1"><stop offset="0" stop-color="#dcdad3"/><stop offset=".5" stop-color="#f4f4f0"/><stop offset="1" stop-color="#ffffff"/></linearGradient></defs><circle cx="6.5" cy="6.5" r="6" fill="url(#rg)" stroke="#1c5180" stroke-width="1"/></svg>
<svg style="left:790px;top:168px;" width="13" height="13" viewBox="0 0 13 13"><defs><linearGradient id="rg" x1="0" y1="0" x2="1" y2="1"><stop offset="0" stop-color="#dcdad3"/><stop offset=".5" stop-color="#f4f4f0"/><stop offset="1" stop-color="#ffffff"/></linearGradient></defs><circle cx="6.5" cy="6.5" r="6" fill="url(#rg)" stroke="#1c5180" stroke-width="1"/><circle cx="6.5" cy="6.5" r="2.4" fill="#21a121"/><circle cx="6" cy="6" r="1" fill="#8ce08c"/></svg>
<svg style="left:868px;top:168px;" width="13" height="13" viewBox="0 0 13 13"><defs><linearGradient id="rg" x1="0" y1="0" x2="1" y2="1"><stop offset="0" stop-color="#dcdad3"/><stop offset=".5" stop-color="#f4f4f0"/><stop offset="1" stop-color="#ffffff"/></linearGradient></defs><circle cx="6.5" cy="6.5" r="6" fill="url(#rg)" stroke="#1c5180" stroke-width="1"/></svg>
<div class="a" style="left:523px;top:204px;width:294px;height:21px;background:#fff;border:1px solid #7f9db9;"></div>
<div class="a" style="left:800px;top:206px;width:15px;height:17px;background:linear-gradient(135deg,#c6d6fc,#b8cdf9 50%,#aec4f6);border-radius:2px;box-shadow:inset -1px -1px 0 #a2b8ee, inset 1px 1px 0 #d8e4fd;"></div>
<svg style="left:800px;top:206px;" width="15" height="17" viewBox="0 0 15 17"><path d="M4 6.5 L7.5 10.0 L11 6.5" stroke="#4d6185" stroke-width="2" fill="none"/></svg>
<div class="a" style="left:523px;top:237px;width:294px;height:21px;background:#fff;border:1px solid #7f9db9;"></div>
<div class="a" style="left:800px;top:239px;width:15px;height:17px;background:linear-gradient(135deg,#c6d6fc,#b8cdf9 50%,#aec4f6);border-radius:2px;box-shadow:inset -1px -1px 0 #a2b8ee, inset 1px 1px 0 #d8e4fd;"></div>
<svg style="left:800px;top:239px;" width="15" height="17" viewBox="0 0 15 17"><path d="M4 6.5 L7.5 10.0 L11 6.5" stroke="#4d6185" stroke-width="2" fill="none"/></svg>
<div class="a" style="left:523px;top:269px;width:38px;height:20px;background:#fff;border:1px solid #7f9db9;"></div>
<div class="a" style="left:567px;top:269px;width:38px;height:20px;background:#fff;border:1px solid #7f9db9;"></div>
<div class="a" style="left:612px;top:269px;width:75px;height:20px;background:#fff;border:1px solid #7f9db9;"></div>
<div class="a" style="left:696px;top:269px;width:120px;height:20px;background:#fff;border:1px solid #7f9db9;"></div>
<div class="a" style="left:523px;top:300px;width:339px;height:20px;background:#fff;border:1px solid #7f9db9;"></div>
<div class="a" style="left:523px;top:328px;width:32px;height:20px;background:#fff;border:1px solid #7f9db9;"></div>
<div class="a" style="left:637px;top:328px;width:354px;height:20px;background:#fff;border:1px solid #7f9db9;"></div>
<div class="a" style="left:523px;top:360px;width:294px;height:21px;background:#fff;border:1px solid #7f9db9;"></div>
<div class="a" style="left:800px;top:362px;width:15px;height:17px;background:linear-gradient(135deg,#c6d6fc,#b8cdf9 50%,#aec4f6);border-radius:2px;box-shadow:inset -1px -1px 0 #a2b8ee, inset 1px 1px 0 #d8e4fd;"></div>
<svg style="left:800px;top:362px;" width="15" height="17" viewBox="0 0 15 17"><path d="M4 6.5 L7.5 10.0 L11 6.5" stroke="#4d6185" stroke-width="2" fill="none"/></svg>
<div class="a" style="left:418px;top:401px;width:574px;height:184px;background:#fff;border:1px solid #000;"></div>
<div class="a" style="left:419px;top:402px;width:556px;height:19px;background:linear-gradient(180deg,#f2f0e6,#ECE9D8 60%,#e2dfcf);border-bottom:2px solid #d6d3c0;"></div>
<div class="a" style="left:695px;top:405px;width:1px;height:13px;background:#cbc8b6;"></div>
<div class="a" style="left:696px;top:405px;width:1px;height:13px;background:#fff;"></div>
<div class="a" style="left:419px;top:438px;width:556px;height:1px;background:#ebeae0;"></div>
<div class="a" style="left:419px;top:455px;width:556px;height:1px;background:#ebeae0;"></div>
<div class="a" style="left:419px;top:472px;width:556px;height:1px;background:#ebeae0;"></div>
<div class="a" style="left:419px;top:489px;width:556px;height:1px;background:#ebeae0;"></div>
<div class="a" style="left:419px;top:506px;width:556px;height:1px;background:#ebeae0;"></div>
<div class="a" style="left:419px;top:523px;width:556px;height:1px;background:#ebeae0;"></div>
<div class="a" style="left:419px;top:540px;width:556px;height:1px;background:#ebeae0;"></div>
<div class="a" style="left:419px;top:557px;width:556px;height:1px;background:#ebeae0;"></div>
<div class="a" style="left:419px;top:574px;width:556px;height:1px;background:#ebeae0;"></div>
<div class="a" style="left:697px;top:421px;width:1px;height:162px;background:#ebeae0;"></div>
<div class="a" style="left:975px;top:402px;width:16px;height:181px;background:linear-gradient(90deg,#f3f1ec,#fefefb 60%,#f3f1ec);"></div>
<div class="a" style="left:976px;top:403px;width:15px;height:15px;background:linear-gradient(135deg,#d4e0fd,#b8ccf8);border:1px solid #fff;border-radius:2px;box-shadow:inset -1px -1px 0 #a8bcee;"></div>
<svg style="left:976px;top:403px;" width="15" height="15" viewBox="0 0 15 15"><path d="M3.5 9 L7.5 5 L11.5 9" stroke="#4d6185" stroke-width="2" fill="none"/></svg>
<div class="a" style="left:976px;top:568px;width:15px;height:15px;background:linear-gradient(135deg,#d4e0fd,#b8ccf8);border:1px solid #fff;border-radius:2px;box-shadow:inset -1px -1px 0 #a8bcee;"></div>
<svg style="left:976px;top:568px;" width="15" height="15" viewBox="0 0 15 15"><path d="M3.5 5 L7.5 9 L11.5 5" stroke="#4d6185" stroke-width="2" fill="none"/></svg>
<div class="a" style="left:976px;top:459px;width:15px;height:87px;background:linear-gradient(90deg,#c8d6fc,#bccdf8);border:1px solid #fff;border-radius:2px;box-shadow:inset -1px -1px 0 #a8bcee;"></div>
<svg style="left:976px;top:496px;" width="15" height="15" viewBox="0 0 15 15"><path d="M4 5.5 H11 M4 7.5 H11 M4 9.5 H11 M4 11.5 H11" stroke="#8ca4e0"/></svg>
<div class="a" style="left:919px;top:595px;width:73px;height:21px;background:linear-gradient(180deg,#fff 0%,#f4f3ee 50%,#e6e4da 90%,#d6d0c5 100%);border:1px solid #003c74;border-radius:3px;"></div>
<span class="t" style="left:27.00px;top:9.70px;font-family:'Liberation Sans',sans-serif;font-size:14px;font-weight:bold;color:#d9e3f9;transform:scaleX(0.8926);">AutoCAD 2006 - NICHT FÜR DEN WIEDERVERKAUF - [D:\EPLANPPE\Projects\Stammdaten\Schema.dwg]</span>
<span class="t" style="left:29.46px;top:34.00px;font-size:11px;color:#aca899;font-family:'Liberation Sans',sans-serif;transform:scaleX(1.0417);">Datei</span>
<span class="t" style="left:66.40px;top:34.00px;font-size:11px;color:#aca899;font-family:'Liberation Sans',sans-serif;">Bearbeiten</span>
<span class="t" style="left:131.60px;top:34.00px;font-size:11px;color:#aca899;font-family:'Liberation Sans',sans-serif;transform:scaleX(0.9639);">Ansicht</span>
<span class="t" style="left:177.20px;top:34.00px;font-size:11px;color:#aca899;font-family:'Liberation Sans',sans-serif;">Einfügen</span>
<span class="t" style="left:231.21px;top:34.00px;font-size:11px;color:#aca899;font-family:'Liberation Sans',sans-serif;transform:scaleX(0.9853);">Format</span>
<span class="t" style="left:277.48px;top:34.00px;font-size:11px;color:#aca899;font-family:'Liberation Sans',sans-serif;transform:scaleX(1.0233);">Extras</span>
<span class="t" style="left:321.40px;top:34.00px;font-size:11px;color:#aca899;font-family:'Liberation Sans',sans-serif;transform:scaleX(0.9467);">Zeichnen</span>
<span class="t" style="left:375.23px;top:34.00px;font-size:11px;color:#aca899;font-family:'Liberation Sans',sans-serif;transform:scaleX(0.9673);">Bemaßung</span>
<span class="t" style="left:438.40px;top:34.00px;font-size:11px;color:#aca899;font-family:'Liberation Sans',sans-serif;">Ändern</span>
<span class="t" style="left:484.29px;top:34.00px;font-size:11px;color:#aca899;font-family:'Liberation Sans',sans-serif;transform:scaleX(1.0083);">Fenster</span>
<span class="t" style="left:533.54px;top:34.00px;font-size:11px;color:#aca899;font-family:'Liberation Sans',sans-serif;transform:scaleX(0.8600);">?</span>
<span class="t" style="left:550.65px;top:34.00px;font-size:11px;color:#aca899;font-family:'Liberation Sans',sans-serif;transform:scaleX(0.8517);">EPLAN PPE</span>
<span class="t" style="left:127.00px;top:87.50px;font-family:'Liberation Sans',sans-serif;font-size:11px;color:#aca899;transform:scaleX(0.9700);">AVO_STD</span>
<span class="t" style="left:424.42px;top:87.00px;font-family:'Liberation Sans',sans-serif;font-size:11px;color:#aca899;transform:scaleX(0.9816);">Farbe 252</span>
<span class="t" style="left:630.02px;top:87.00px;font-family:'Liberation Sans',sans-serif;font-size:11px;color:#aca899;transform:scaleX(0.9766);">CON...UOUS</span>
<span class="t" style="left:772.00px;top:87.00px;font-family:'Liberation Sans',sans-serif;font-size:11px;color:#aca899;transform:scaleX(0.9783);">VonLayer</span>
<span class="t" style="left:868.00px;top:87.00px;font-family:'Liberation Sans',sans-serif;font-size:11px;color:#aca899;transform:scaleX(0.9787);">VonFarbe</span>
<span class="t" style="left:93.97px;top:121.70px;font-family:'Liberation Sans',sans-serif;color:#000;font-size:38px;transform:scaleX(1.0312);">TR</span>
<span class="t" style="left:87.37px;top:177.60px;font-family:'Liberation Sans',sans-serif;color:#000;font-size:37px;transform:scaleX(1.0672);">909</span>
<span class="t" style="left:288.56px;top:121.70px;font-family:'Liberation Sans',sans-serif;color:#000;font-size:38px;transform:scaleX(1.0478);">FR</span>
<span class="t" style="left:281.89px;top:177.60px;font-family:'Liberation Sans',sans-serif;color:#000;font-size:37px;transform:scaleX(1.0534);">925</span>
<span class="t" style="left:92.50px;top:283.50px;font-family:'Liberation Mono',monospace;color:#000;font-size:15px;transform:scaleX(0.8000);">TR 909</span>
<span class="t" style="left:291.38px;top:283.50px;font-family:'Liberation Mono',monospace;color:#000;font-size:15px;transform:scaleX(0.8212);">FR 925</span>
<span class="t" style="left:91.75px;top:372.70px;font-family:'Liberation Mono',monospace;color:#000;font-size:15px;transform:scaleX(0.8500);">0-T-1</span>
<span class="t" style="left:93.09px;top:395.00px;font-family:'Liberation Mono',monospace;color:#000;font-size:15px;transform:scaleX(0.7062);">20 - 110 °C</span>
<span class="t" style="left:93.80px;top:416.80px;font-family:'Liberation Mono',monospace;color:#000;font-size:15px;transform:scaleX(0.7200);">TR 21</span>
<span class="t" style="left:291.97px;top:372.70px;font-family:'Liberation Mono',monospace;color:#000;font-size:15px;transform:scaleX(0.8318);">0-F-1</span>
<span class="t" style="left:292.07px;top:394.50px;font-family:'Liberation Mono',monospace;color:#000;font-size:15px;transform:scaleX(0.7331);">2,5 - 3,5 m³/min</span>
<span class="t" style="left:291.93px;top:416.80px;font-family:'Liberation Mono',monospace;color:#000;font-size:15px;transform:scaleX(0.8735);">M440</span>
<span class="t" style="left:336.60px;top:670.70px;font-family:'Liberation Mono',monospace;color:#000;font-size:15px;transform:scaleX(0.7887);">TR 917</span>
<span class="t" style="left:116.03px;top:719.00px;font-family:'Liberation Sans',sans-serif;font-size:11px;color:#000;transform:scaleX(0.9677);">Modell</span>
<span class="t" style="left:157.51px;top:719.00px;font-family:'Liberation Sans',sans-serif;font-size:11px;color:#000;transform:scaleX(0.9868);">Layout1</span>
<span class="t" style="left:21.96px;top:758.50px;font-family:'Liberation Mono',monospace;font-size:13px;color:#000;transform:scaleX(1.0437);">PLT-Stelle auswählen:</span>
<span class="t" style="left:11.51px;top:781.50px;font-family:'Liberation Sans',sans-serif;font-size:11px;color:#000;transform:scaleX(0.9938);">150.2, 228.2, 0.0</span>
<span class="t" style="left:253.46px;top:780.50px;font-family:'Liberation Sans',sans-serif;font-size:11px;color:#000;transform:scaleX(1.0357);">FANG</span>
<span class="t" style="left:289.48px;top:780.50px;font-family:'Liberation Sans',sans-serif;font-size:11px;color:#000;transform:scaleX(1.0233);">RASTER</span>
<span class="t" style="left:344.00px;top:781.50px;font-family:'Liberation Sans',sans-serif;font-size:11px;color:#000;">ORTHO</span>
<span class="t" style="left:389.01px;top:780.50px;font-family:'Liberation Sans',sans-serif;font-size:11px;color:#000;transform:scaleX(0.9861);">POLAR</span>
<span class="t" style="left:433.50px;top:780.50px;font-family:'Liberation Sans',sans-serif;font-size:11px;color:#000;">OFANG</span>
<span class="t" style="left:478.50px;top:780.50px;font-family:'Liberation Sans',sans-serif;font-size:11px;color:#000;transform:scaleX(0.9674);">OTRACK</span>
<span class="t" style="left:529.91px;top:781.50px;font-family:'Liberation Sans',sans-serif;font-size:11px;color:#000;transform:scaleX(1.0909);">DYN</span>
<span class="t" style="left:560.45px;top:780.50px;font-family:'Liberation Sans',sans-serif;font-size:11px;color:#000;transform:scaleX(1.0526);">LST</span>
<span class="t" style="left:590.52px;top:781.50px;font-family:'Liberation Sans',sans-serif;font-size:11px;color:#000;transform:scaleX(0.9773);">MODELL</span>
<span class="t" style="left:405.69px;top:119.00px;font-family:'Liberation Sans',sans-serif;font-size:13px;font-weight:bold;color:#fff;text-shadow:1px 1px 0 #0a2a90;transform:scaleX(1.0099);">PLT-Stelle bearbeiten</span>
<span class="t" style="left:426.04px;top:149.00px;font-family:'Liberation Sans',sans-serif;font-size:11px;color:#1c48c4;transform:scaleX(0.9614);">R&amp;I-Symbol</span>
<span class="t" style="left:831.30px;top:200.00px;font-family:'Liberation Sans',sans-serif;font-size:11px;color:#1c48c4;transform:scaleX(0.9674);">Anlagenzuordnung</span>
<span class="t" style="left:442.60px;top:169.00px;font-family:'Liberation Sans',sans-serif;font-size:11px;color:#000;transform:scaleX(0.9353);">vor Ort</span>
<span class="t" style="left:517.72px;top:169.00px;font-family:'Liberation Sans',sans-serif;font-size:11px;color:#000;transform:scaleX(0.9788);">Messwarte</span>
<span class="t" style="left:604.00px;top:169.00px;font-family:'Liberation Sans',sans-serif;font-size:11px;color:#000;">Leitstand</span>
<span class="t" style="left:708.75px;top:169.00px;font-family:'Liberation Sans',sans-serif;font-size:11px;color:#000;transform:scaleX(0.9510);">Allgemein</span>
<span class="t" style="left:805.67px;top:169.00px;font-family:'Liberation Sans',sans-serif;font-size:11px;color:#000;transform:scaleX(0.9350);">PLS</span>
<span class="t" style="left:883.75px;top:169.00px;font-family:'Liberation Sans',sans-serif;font-size:11px;color:#000;transform:scaleX(0.9539);">Prozessrechner</span>
<span class="t" style="left:417.90px;top:209.00px;font-family:'Liberation Sans',sans-serif;font-size:11px;color:#000;transform:scaleX(0.9500);">Auftrag:</span>
<span class="t" style="left:526.52px;top:209.60px;font-family:'Liberation Sans',sans-serif;font-size:11px;color:#000;transform:scaleX(0.9825);">Erweiterung</span>
<span class="t" style="left:417.90px;top:239.40px;font-family:'Liberation Sans',sans-serif;font-size:11px;color:#000;transform:scaleX(0.9533);">AKS-Schlüssel:</span>
<span class="t" style="left:527.50px;top:242.50px;font-family:'Liberation Sans',sans-serif;font-size:11px;color:#000;transform:scaleX(0.9756);">GW ES SA SWV</span>
<span class="t" style="left:417.06px;top:274.20px;font-family:'Liberation Sans',sans-serif;font-size:11px;color:#000;transform:scaleX(0.9398);">Messstellen-Nummer</span>
<span class="t" style="left:569.42px;top:274.20px;font-family:'Liberation Sans',sans-serif;font-size:11px;color:#000;transform:scaleX(1.1800);">F</span>
<span class="t" style="left:614.22px;top:274.20px;font-family:'Liberation Sans',sans-serif;font-size:11px;color:#000;transform:scaleX(1.1833);">R</span>
<span class="t" style="left:699.80px;top:274.20px;font-family:'Liberation Sans',sans-serif;font-size:11px;color:#000;transform:scaleX(0.9833);">925</span>
<span class="t" style="left:832.50px;top:216.70px;font-family:'Liberation Sans',sans-serif;font-size:11px;color:#000;transform:scaleX(0.9651);">Gaswerk</span>
<span class="t" style="left:831.50px;top:231.50px;font-family:'Liberation Sans',sans-serif;font-size:11px;color:#000;">Dampf / Spaltgas</span>
<span class="t" style="left:831.52px;top:246.20px;font-family:'Liberation Sans',sans-serif;font-size:11px;color:#000;transform:scaleX(0.9789);">Spaltanlage</span>
<span class="t" style="left:831.53px;top:260.70px;font-family:'Liberation Sans',sans-serif;font-size:11px;color:#000;transform:scaleX(0.9675);">Speisewasser Versorgung</span>
<span class="t" style="left:417.52px;top:304.60px;font-family:'Liberation Sans',sans-serif;font-size:11px;color:#000;transform:scaleX(0.9769);">Bezeichnung:</span>
<span class="t" style="left:525.55px;top:304.60px;font-family:'Liberation Sans',sans-serif;font-size:11px;color:#000;transform:scaleX(0.9509);">Speisewasserzufluß zur Trommel</span>
<span class="t" style="left:417.57px;top:332.75px;font-family:'Liberation Sans',sans-serif;font-size:11px;color:#000;transform:scaleX(0.9344);">Blattnummer:</span>
<span class="t" style="left:526.90px;top:333.00px;font-family:'Liberation Sans',sans-serif;font-size:11px;color:#000;transform:scaleX(1.0167);">4</span>
<span class="t" style="left:569.64px;top:332.75px;font-family:'Liberation Sans',sans-serif;font-size:11px;color:#000;transform:scaleX(0.9621);">Bemerkung:</span>
<span class="t" style="left:417.52px;top:359.80px;font-family:'Liberation Sans',sans-serif;font-size:11px;color:#000;transform:scaleX(0.9755);">Eigenschaftsgruppen</span>
<span class="t" style="left:417.54px;top:375.50px;font-family:'Liberation Sans',sans-serif;font-size:11px;color:#000;transform:scaleX(0.9644);">Messstellen:</span>
<span class="t" style="left:526.53px;top:365.50px;font-family:'Liberation Sans',sans-serif;font-size:11px;color:#000;transform:scaleX(0.9726);">Messstoffdaten</span>
<span class="t" style="left:426.32px;top:407.50px;font-family:'Liberation Sans',sans-serif;font-size:11px;color:#000;transform:scaleX(0.9807);">Eigenschaft</span>
<span class="t" style="left:705.60px;top:407.50px;font-family:'Liberation Sans',sans-serif;font-size:11px;color:#000;transform:scaleX(1.0217);">Wert</span>
<span class="t" style="left:425.60px;top:426.00px;font-family:'Liberation Sans',sans-serif;font-size:11px;color:#000;transform:scaleX(0.9928);">Aggregatzustand</span>
<span class="t" style="left:701.43px;top:426.00px;font-family:'Liberation Sans',sans-serif;font-size:11px;color:#000;transform:scaleX(0.9727);">Flüssig</span>
<span class="t" style="left:425.60px;top:443.00px;font-family:'Liberation Sans',sans-serif;font-size:11px;color:#000;transform:scaleX(0.9762);">Verhalten in Entnahmeleitung</span>
<span class="t" style="left:701.41px;top:443.00px;font-family:'Liberation Sans',sans-serif;font-size:11px;color:#000;transform:scaleX(0.9911);">unkritisch</span>
<span class="t" style="left:425.60px;top:460.00px;font-family:'Liberation Sans',sans-serif;font-size:11px;color:#000;">Arbeitstemperatur</span>
<span class="t" style="left:701.39px;top:460.00px;font-family:'Liberation Sans',sans-serif;font-size:11px;color:#000;transform:scaleX(1.0129);">35 - 60 - 85 °C</span>
<span class="t" style="left:425.60px;top:477.00px;font-family:'Liberation Sans',sans-serif;font-size:11px;color:#000;transform:scaleX(0.9740);">Arbeitsdruck absolut</span>
<span class="t" style="left:701.36px;top:477.00px;font-family:'Liberation Sans',sans-serif;font-size:11px;color:#000;transform:scaleX(1.0442);">1,5 - 3,5 - 5,5  bar</span>
<span class="t" style="left:424.64px;top:494.00px;font-family:'Liberation Sans',sans-serif;font-size:11px;color:#000;transform:scaleX(0.9574);">Messgröße</span>
<span class="t" style="left:701.42px;top:494.00px;font-family:'Liberation Sans',sans-serif;font-size:11px;color:#000;transform:scaleX(0.9750);">siehe Messung</span>
<span class="t" style="left:424.63px;top:511.00px;font-family:'Liberation Sans',sans-serif;font-size:11px;color:#000;transform:scaleX(0.9656);">Messbereich</span>
<span class="t" style="left:702.40px;top:511.00px;font-family:'Liberation Sans',sans-serif;font-size:11px;color:#000;transform:scaleX(1.0130);">2,5 - 3,5 m³/min</span>
<span class="t" style="left:425.60px;top:528.00px;font-family:'Liberation Sans',sans-serif;font-size:11px;color:#000;transform:scaleX(0.9667);">Grenzwerte</span>
<span class="t" style="left:701.37px;top:528.00px;font-family:'Liberation Sans',sans-serif;font-size:11px;color:#000;transform:scaleX(1.0268);">3 m³/min</span>
<span class="t" style="left:424.63px;top:545.00px;font-family:'Liberation Sans',sans-serif;font-size:11px;color:#000;transform:scaleX(0.9714);">Dichte im Betriebszustand</span>
<span class="t" style="left:701.38px;top:545.00px;font-family:'Liberation Sans',sans-serif;font-size:11px;color:#000;transform:scaleX(1.0167);">1000 kg/m³</span>
<span class="t" style="left:424.64px;top:562.00px;font-family:'Liberation Sans',sans-serif;font-size:11px;color:#000;transform:scaleX(0.9645);">Dichte im Normalzustand</span>
<span class="t" style="left:701.38px;top:562.00px;font-family:'Liberation Sans',sans-serif;font-size:11px;color:#000;transform:scaleX(1.0167);">1000 kg/m³</span>
<span class="t" style="left:424.65px;top:579.00px;font-family:'Liberation Sans',sans-serif;font-size:11px;color:#000;transform:scaleX(0.9491);">Dynamische Viskosität</span>
<span class="t" style="left:701.41px;top:579.00px;font-family:'Liberation Sans',sans-serif;font-size:11px;color:#000;transform:scaleX(0.9909);">10 Ns/m²</span>
<span class="t" style="left:931.20px;top:599.30px;font-family:'Liberation Sans',sans-serif;font-size:11px;color:#000;">Schließen</span>
<div class="a" style="left:418px;top:584px;width:574px;height:1px;background:#000"></div><div class="a" style="left:419px;top:585px;width:560px;height:9px;background:#ECE9D8"></div><div class="a" style="left:4px;top:30px;width:1px;height:765px;background:#7d8fe0"></div>
</body></html>
